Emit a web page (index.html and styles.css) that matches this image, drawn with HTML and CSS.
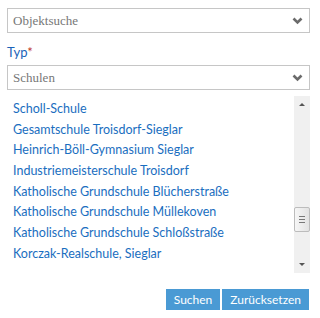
FILE: index.html
```html
<!DOCTYPE html>
<html lang="de">
<head>
    <meta charset="UTF-8">
    <meta name="viewport" content="width=device-width, initial-scale=1.0">
    <title>Objektsuche</title>
    <link rel="stylesheet" href="styles.css">
</head>
<body>
    <div class="panel">
        <div class="select">
            <span class="select-text">Objektsuche</span>
            <svg class="chevron" width="11" height="8" viewBox="0 0 11 8"><path d="M1.5 1.5 L5.5 5.5 L9.5 1.5" fill="none" stroke="#6b6b6b" stroke-width="2.6"/></svg>
        </div>

        <label class="field-label">Typ<span class="required">*</span></label>

        <div class="select">
            <span class="select-text">Schulen</span>
            <svg class="chevron" width="11" height="8" viewBox="0 0 11 8"><path d="M1.5 1.5 L5.5 5.5 L9.5 1.5" fill="none" stroke="#6b6b6b" stroke-width="2.6"/></svg>
        </div>

        <div class="results">
            <ul class="result-list">
                <li><a href="#">Scholl-Schule</a></li>
                <li><a href="#">Gesamtschule Troisdorf-Sieglar</a></li>
                <li><a href="#">Heinrich-Böll-Gymnasium Sieglar</a></li>
                <li><a href="#">Industriemeisterschule Troisdorf</a></li>
                <li><a href="#">Katholische Grundschule Blücherstraße</a></li>
                <li><a href="#">Katholische Grundschule Müllekoven</a></li>
                <li><a href="#">Katholische Grundschule Schloßstraße</a></li>
                <li><a href="#">Korczak-Realschule, Sieglar</a></li>
            </ul>
            <div class="scrollbar">
                <span class="arrow up"></span>
                <div class="track">
                    <div class="thumb">
                        <span class="grip"></span>
                        <span class="grip"></span>
                        <span class="grip"></span>
                    </div>
                </div>
                <span class="arrow down"></span>
            </div>
        </div>

        <div class="actions">
            <button>Suchen</button>
            <button>Zurücksetzen</button>
        </div>
    </div>
</body>
</html>
```

FILE: styles.css
```css
body {
    margin: 0;
    padding: 8px 10px 0 7px;
    background: white;
    font-family: Lato, 'Noto Sans', sans-serif;
}
.select {
    display: flex;
    align-items: center;
    justify-content: space-between;
    height: 23px;
    border: 1px solid #c6c6c6;
    padding: 0 6px 0 5px;
}
.select-text {
    font-family: 'Liberation Serif', serif;
    font-size: 13px;
    color: #777;
}
.chevron {
    display: block;
}
.field-label {
    display: block;
    margin: 11px 0 5px;
    font-size: 13px;
    line-height: 16px;
    color: #1a63b8;
}
.required {
    color: #c0392b;
}
.results {
    display: flex;
    margin-top: 6px;
    height: 177px;
}
.result-list {
    flex: 1;
    list-style: none;
    margin: 0;
    padding: 3px 0 0 6px;
    overflow: hidden;
}
.result-list li {
    height: 20.7px;
    line-height: 20.7px;
    font-size: 12.5px;
    white-space: nowrap;
}
.result-list a {
    color: #1a6ec0;
    text-decoration: none;
}
.scrollbar {
    width: 16px;
    display: flex;
    flex-direction: column;
    background: #f0f0f0;
}
.arrow {
    height: 17px;
    display: flex;
    align-items: center;
    justify-content: center;
}
.arrow::before {
    content: "";
    border-left: 3px solid transparent;
    border-right: 3px solid transparent;
}
.arrow.up::before {
    border-bottom: 3px solid #555;
}
.arrow.down::before {
    border-top: 3px solid #555;
}
.track {
    flex: 1;
    padding-top: 94px;
}
.thumb {
    height: 25px;
    box-sizing: border-box;
    border: 1px solid #bcbcbc;
    border-radius: 2px;
    background: linear-gradient(to right, #f6f6f6, #e2e2e2);
    display: flex;
    flex-direction: column;
    justify-content: center;
    align-items: center;
    gap: 2px;
}
.grip {
    width: 6px;
    height: 1px;
    background: #777;
}
.actions {
    display: flex;
    justify-content: flex-end;
    gap: 2px;
    margin-top: 16px;
    padding-right: 1px;
}
button {
    background: #4a9ad4;
    color: white;
    border: none;
    height: 21px;
    padding: 0 8px;
    font-family: Lato, 'Noto Sans', sans-serif;
    font-size: 12px;
    line-height: 21px;
    cursor: pointer;
}
```
